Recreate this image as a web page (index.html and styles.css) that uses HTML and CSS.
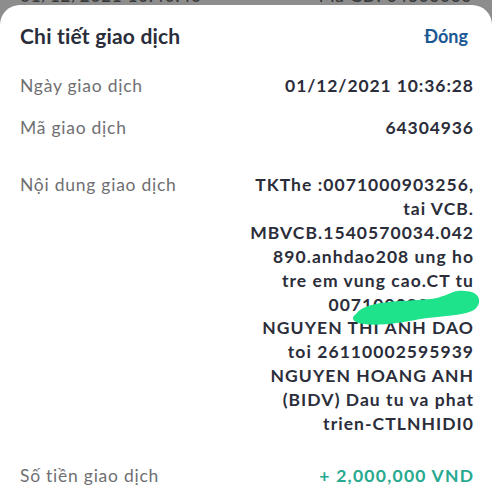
FILE: index.html
```html
<!DOCTYPE html>
<html lang="vi">
<head>
<meta charset="utf-8">
<link rel="stylesheet" href="styles.css">
</head>
<body>
<div class="backdrop">
  <div class="backdrop-row">
    <span>01/12/2021 10:40:40</span>
    <span>Mã GD: 64306066</span>
  </div>
</div>
<div class="sheet">
  <div class="header">
    <h1 class="title">Chi tiết giao dịch</h1>
    <span class="close">Đóng</span>
  </div>
  <div class="row row-first">
    <span class="label">Ngày giao dịch</span>
    <span class="value">01/12/2021 10:36:28</span>
  </div>
  <div class="row row-second">
    <span class="label">Mã giao dịch</span>
    <span class="value">64304936</span>
  </div>
  <div class="row row-desc">
    <span class="label">Nội dung giao dịch</span>
    <div class="value desc">
      TKThe :0071000903256,<br>
      tai VCB.<br>
      MBVCB.1540570034.042<br>
      890.anhdao208 ung ho<br>
      tre em vung cao.CT tu<br>
      0071000903256<br>
      NGUYEN THI ANH DAO<br>
      toi 26110002595939<br>
      NGUYEN HOANG ANH<br>
      (BIDV) Dau tu va phat<br>
      trien-CTLNHIDI0
      <svg class="scribble" width="134" height="38" viewBox="350 288 134 38">
        <path d="M356,313 C366,299 400,301 430,298 C448,296 452,288 465,290 C482,290 483,305 472,310 C460,315 440,315 420,318 C400,322 380,325 364,323 C353,322 350,317 356,313 Z" fill="#1fe38b"/>
      </svg>
    </div>
  </div>
  <div class="row row-amount">
    <span class="label">Số tiền giao dịch</span>
    <span class="value amount">+ 2,000,000 VND</span>
  </div>
</div>
</body>
</html>
```
FILE: styles.css
```css
* { box-sizing: border-box; }
html, body { margin: 0; padding: 0; }
body {
  width: 492px;
  height: 500px;
  overflow: hidden;
  background: #8d8d8d;
  font-family: "Lato", "Noto Sans", sans-serif;
  color: #2b2e3a;
}
.backdrop {
  height: 5px;
  overflow: hidden;
}
.backdrop-row {
  display: flex;
  justify-content: space-between;
  padding: 0 20px;
  margin-top: -13px;
  font-size: 17px;
  line-height: 18px;
  color: #3a3a3a;
  font-weight: 600;
  letter-spacing: 0.8px;
}
.sheet {
  background: #ffffff;
  border-radius: 20px 20px 0 0;
  padding: 0 19px 0 20px;
  height: 495px;
}
.header {
  height: 64px;
  padding-bottom: 3px;
  display: flex;
  align-items: center;
  justify-content: space-between;
}
.title {
  margin: 0;
  font-size: 21px;
  font-weight: 700;
  color: #2a2d3a;
  letter-spacing: 0.2px;
}
.close {
  font-size: 18px;
  font-weight: 700;
  color: #1a5894;
  padding-right: 5px;
}
.row {
  display: flex;
  justify-content: space-between;
  align-items: flex-start;
  padding: 9px 0;
  font-size: 17.5px;
  line-height: 24px;
}
.row-first { margin-top: -4px; }
.row-second { margin-top: 0; }
.row-desc { padding-top: 24px; }
.row-amount { padding-top: 19px; }
.label {
  color: #6f6f72;
  font-weight: 400;
  letter-spacing: 0.75px;
}
.value {
  font-weight: 700;
  text-align: right;
  color: #2b2e3a;
  letter-spacing: 0.9px;
  margin-right: -0.9px;
}
.desc {
  position: relative;
  line-height: 23.9px;
  letter-spacing: 1.05px;
  margin-right: -1.05px;
}
.scribble {
  position: absolute;
  right: -10px;
  top: 116px;
  display: block;
}
.amount {
  color: #27a98f;
  letter-spacing: 1.25px;
  margin-right: -1.25px;
}
```
